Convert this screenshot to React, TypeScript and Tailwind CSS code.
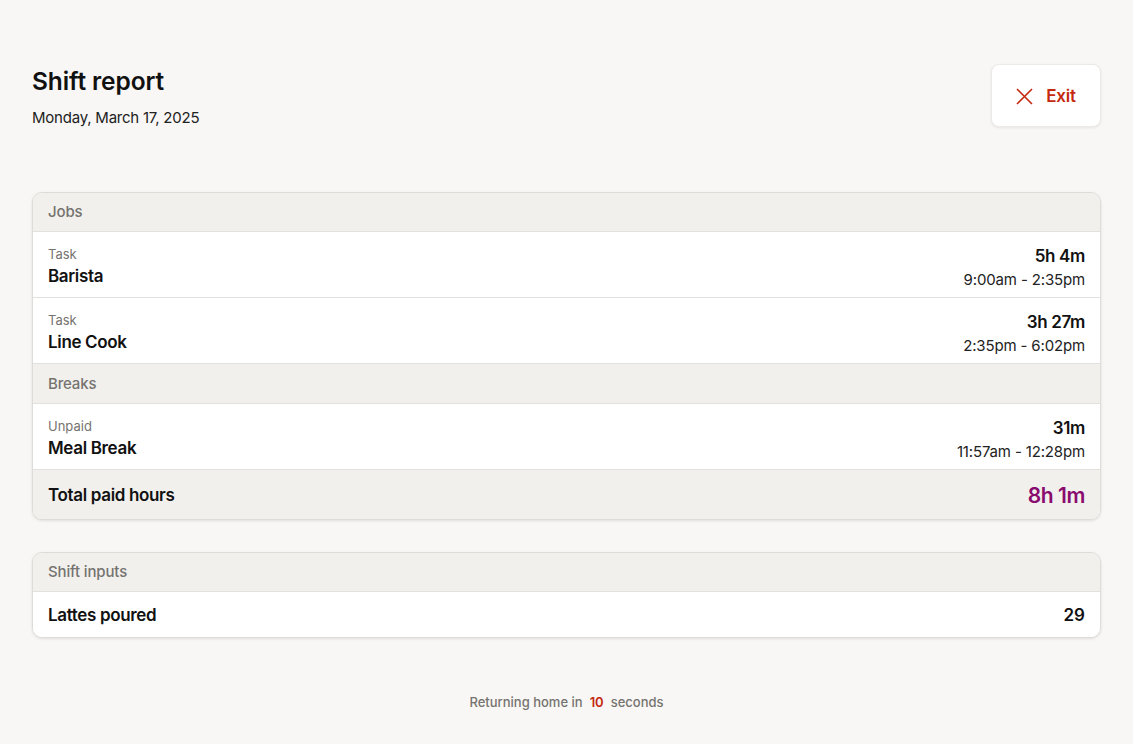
import React from "react";

type Item = { label: string; name: string; duration: string; range: string };

const jobs: Item[] = [
  { label: "Task", name: "Barista", duration: "5h 4m", range: "9:00am - 2:35pm" },
  { label: "Task", name: "Line Cook", duration: "3h 27m", range: "2:35pm - 6:02pm" },
];

const breaks: Item[] = [
  { label: "Unpaid", name: "Meal Break", duration: "31m", range: "11:57am - 12:28pm" },
];

function SectionHeader({ title, tall }: { title: string; tall?: boolean }) {
  return (
    <div
      className={`${tall ? "h-[40px] pt-[1px]" : "h-[39px]"} flex items-center px-[15px] bg-[#f1f0ed] border-b border-[#e3e1dd] text-[15px] font-medium tracking-[-0.01em] text-[#75736f]`}
    >
      {title}
    </div>
  );
}

function Row({ item }: { item: Item }) {
  return (
    <div className="h-[66px] flex items-center justify-between px-[15px] bg-white border-b border-[#e3e1dd]">
      <div className="flex flex-col pt-[3px]">
        <span className="text-[13px] leading-[16px] text-[#75736f]">{item.label}</span>
        <span className="mt-[3px] text-[17px] leading-[22px] font-semibold tracking-[-0.02em] text-[#111]">
          {item.name}
        </span>
      </div>
      <div className="flex flex-col items-end pt-[7px]">
        <span className="text-[17px] leading-[22px] font-semibold tracking-[-0.02em] text-[#111]">
          {item.duration}
        </span>
        <span className="mt-[1px] text-[15px] leading-[24px] tracking-[-0.01em] text-[#222]">{item.range}</span>
      </div>
    </div>
  );
}

export default function App() {
  return (
    <div
      className="min-h-[744px] w-full bg-[#f8f7f5] px-8 pt-16 text-[#111]"
      style={{ fontFamily: "Inter, 'Noto Sans', sans-serif" }}
    >
      <div className="flex items-start justify-between">
        <div className="pt-[2px]">
          <h1 className="text-[24.5px] leading-[30px] font-semibold tracking-[-0.005em]">Shift report</h1>
          <p className="mt-[12px] text-[15px] leading-[20px] tracking-[-0.015em] text-[#222]">
            Monday, March 17, 2025
          </p>
        </div>
        <button className="w-[110px] h-[63px] rounded-lg bg-white border border-[#eceae6] shadow-[0_1px_3px_rgba(0,0,0,0.08)] flex items-center justify-center gap-[13px] pt-[2px] text-[#c4290e]">
          <svg width="17" height="17" viewBox="0 0 17 17" fill="none" stroke="currentColor" strokeWidth="1.6">
            <path d="M1 1L16 16M16 1L1 16" />
          </svg>
          <span className="text-[17px] font-semibold tracking-[-0.01em]">Exit</span>
        </button>
      </div>

      <div className="mt-[64px] rounded-[10px] border border-[#dedcd8] overflow-hidden shadow-[0_1px_3px_rgba(0,0,0,0.1)]">
        <SectionHeader title="Jobs" />
        {jobs.map((j) => (
          <Row key={j.name} item={j} />
        ))}
        <SectionHeader title="Breaks" tall />
        {breaks.map((b) => (
          <Row key={b.name} item={b} />
        ))}
        <div className="h-[49px] flex items-center justify-between px-[15px] pt-[2px] bg-[#f1f0ed]">
          <span className="text-[17px] font-semibold tracking-[-0.02em]">Total paid hours</span>
          <span className="text-[21px] font-semibold tracking-[-0.02em] text-[#8a0b6e]">8h 1m</span>
        </div>
      </div>

      <div className="mt-[32px] rounded-[10px] border border-[#dedcd8] overflow-hidden shadow-[0_1px_3px_rgba(0,0,0,0.1)]">
        <SectionHeader title="Shift inputs" />
        <div className="h-[45px] flex items-center justify-between px-[15px] pt-[2px] bg-white">
          <span className="text-[17px] font-semibold tracking-[-0.02em]">Lattes poured</span>
          <span className="text-[17px] font-semibold">29</span>
        </div>
      </div>

      <div className="mt-[55px] flex justify-center items-center text-[13px] font-medium text-[#75736f]">
        <span>Returning home in</span>
        <span className="mx-[7px] font-semibold text-[#c4290e]">10</span>
        <span>seconds</span>
      </div>
    </div>
  );
}
